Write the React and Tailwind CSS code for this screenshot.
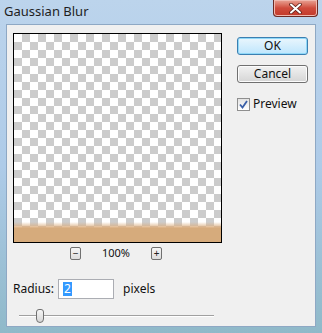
import React from 'react';

const checker = {
  backgroundColor: '#ffffff',
  backgroundImage:
    'linear-gradient(45deg, #cccccc 25%, transparent 25%, transparent 75%, #cccccc 75%), linear-gradient(45deg, #cccccc 25%, transparent 25%, transparent 75%, #cccccc 75%)',
  backgroundSize: '16px 16px',
  backgroundPosition: '0 0, 8px 8px',
};

const font = { fontFamily: '"Segoe UI", "Noto Sans", "DejaVu Sans", sans-serif' };

const SmallBtn = ({ children }) => (
  <div className="w-[11px] h-[13px] border border-[#707070] rounded-[2px] bg-gradient-to-b from-[#f6f6f6] to-[#dcdcdc] flex items-center justify-center text-[10px] leading-none text-[#222]">
    {children}
  </div>
);

const Button = ({ children, focused }) => (
  <div
    className={`w-[71px] h-[18px] rounded-[3px] border flex items-center justify-center text-[12px] text-[#111] ${
      focused
        ? 'border-[#3c7fb1] bg-gradient-to-b from-[#eaf6fd] to-[#bee6fd] shadow-[inset_0_0_0_1px_#8fd8f8]'
        : 'border-[#707070] bg-gradient-to-b from-[#f2f2f2] to-[#d5d5d5] shadow-[inset_0_0_0_1px_#fcfcfc]'
    }`}
  >
    {children}
  </div>
);

export default function App() {
  return (
    <div className="w-[322px] h-[333px] bg-gradient-to-b from-[#bcd4ec] via-[#aecbe8] to-[#8fb9c9] flex flex-col" style={font}>
      {/* Title bar */}
      <div className="h-[24px] flex items-start justify-between pl-[4px] pr-[4px]">
        <span className="text-[13px] leading-none text-[#1e1e1e] mt-[5px]">Gaussian Blur</span>
        <div className="w-[45px] h-[17px] rounded-b-[4px] border border-[#6b2a24] border-t-0 bg-gradient-to-b from-[#e8a295] via-[#cf4b3c] to-[#c2392a] flex items-center justify-center shadow-[inset_0_0_0_1px_#f0b8ae]">
          <svg width="13" height="11" viewBox="0 0 13 11">
            <path d="M2 1.5 L11 9.5 M11 1.5 L2 9.5" stroke="#5a1f18" strokeWidth="3.6" strokeLinecap="round" />
            <path d="M2 1.5 L11 9.5 M11 1.5 L2 9.5" stroke="#ffffff" strokeWidth="2" strokeLinecap="round" />
          </svg>
        </div>
      </div>

      {/* Client area */}
      <div className="flex-1 mx-[6px] mb-[6px] border border-[#8ea8c4] bg-[#f0f0f0] flex">
        <div className="flex flex-col pl-[6px] pt-[8px]">
          <div className="w-[209px] h-[210px] border border-black flex flex-col" style={checker}>
            <div className="flex-1" />
            <div className="h-[6px] bg-gradient-to-b from-transparent to-[#dbae80]" />
            <div className="h-[14px] bg-[#d6ab7c]" />
          </div>
          <div className="flex items-center h-[16px] mt-[2px]">
            <div className="ml-[57px]"><SmallBtn>−</SmallBtn></div>
            <span className="w-[70px] text-center text-[11px] text-[#111]">100%</span>
            <SmallBtn>+</SmallBtn>
          </div>
          <div className="flex items-center mt-[18px] text-[12px] text-[#111]">
            <span>Radius:</span>
            <div className="ml-[4px] w-[56px] h-[20px] bg-white border border-[#abadb3] flex items-center pl-[4px]">
              <span className="bg-[#3399ff] text-white px-[1px] leading-[14px]">2</span>
            </div>
            <span className="ml-[9px]">pixels</span>
          </div>
          <div className="relative mt-[10px] ml-[6px] w-[195px] h-[14px] flex items-center">
            <div className="w-full h-[2px] border-t border-[#a0a0a0] border-b border-b-white" />
            <div className="absolute left-[17px] top-0 w-[8px] h-[14px] rounded-t-[3px] rounded-b-[4px] border border-[#707070] bg-gradient-to-b from-[#f6f6f6] to-[#d6d6d6]" />
          </div>
        </div>
        <div className="flex flex-col ml-[15px] pt-[12px]">
          <Button focused>OK</Button>
          <div className="mt-[10px]"><Button>Cancel</Button></div>
          <div className="flex items-center mt-[12px] text-[12px] text-[#111]">
            <div className="w-[13px] h-[13px] border border-[#8f8f8f] bg-gradient-to-b from-[#e4e4e4] to-white flex items-center justify-center">
              <svg width="9" height="9" viewBox="0 0 9 9">
                <path d="M1 4.5 L3.5 7.5 L8 1" fill="none" stroke="#3a5fa8" strokeWidth="1.8" />
              </svg>
            </div>
            <span className="ml-[3px]">Preview</span>
          </div>
        </div>
      </div>
    </div>
  );
}
